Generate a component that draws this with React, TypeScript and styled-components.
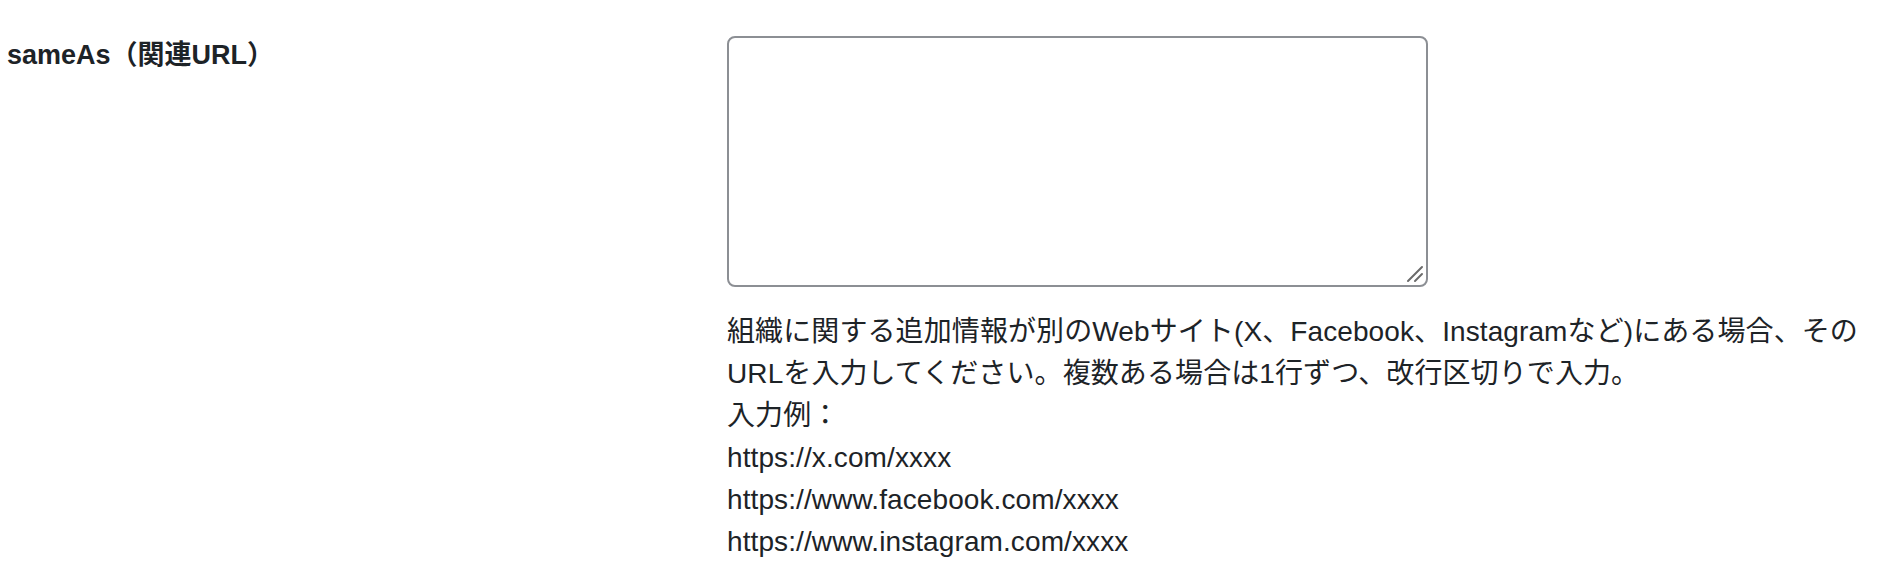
import React from "react";
import styled, { createGlobalStyle } from "styled-components";

const GlobalStyle = createGlobalStyle`
  html, body {
    margin: 0;
    padding: 0;
    background: #ffffff;
  }
  body {
    font-family: "Liberation Sans", "Noto Sans CJK JP", sans-serif;
    color: #1d2327;
  }
`;

const descriptionLines = [
  "組織に関する追加情報が別のWebサイト(X、Facebook、Instagramなど)にある場合、その",
  "URLを入力してください。複数ある場合は1行ずつ、改行区切りで入力。",
  "入力例：",
  "https://x.com/xxxx",
  "https://www.facebook.com/xxxx",
  "https://www.instagram.com/xxxx",
];

const App: React.FC = () => {
  return (
    <>
      <GlobalStyle />
      <Page>
        <Row>
          <Label htmlFor="sameas">sameAs（関連URL）</Label>
          <Field>
            <TextAreaWrap>
              <TextArea id="sameas" name="sameas" />
              <Grip width="18" height="18" viewBox="0 0 18 18" aria-hidden="true">
                <line x1="2" y1="16" x2="16" y2="2" />
                <line x1="9" y1="16" x2="16" y2="9" />
              </Grip>
            </TextAreaWrap>
            <Description>
              {descriptionLines.map((line, i) => (
                <React.Fragment key={i}>
                  {line}
                  {i < descriptionLines.length - 1 && <br />}
                </React.Fragment>
              ))}
            </Description>
          </Field>
        </Row>
      </Page>
    </>
  );
};

export default App;

const Page = styled.div`
  width: 1880px;
  height: 570px;
  box-sizing: border-box;
  padding: 36px 0 0 7px;
  overflow: hidden;
`;

const Row = styled.div`
  display: flex;
  align-items: flex-start;
`;

const Label = styled.label`
  width: 720px;
  flex-shrink: 0;
  padding-top: 2px;
  font-size: 27px;
  font-weight: 700;
  line-height: 34px;
  color: #1d2327;
`;

const Field = styled.div`
  display: flex;
  flex-direction: column;
`;

const TextAreaWrap = styled.div`
  position: relative;
  width: 701px;
  height: 251px;
`;

const TextArea = styled.textarea`
  display: block;
  width: 100%;
  height: 100%;
  box-sizing: border-box;
  margin: 0;
  padding: 8px 12px;
  border: 2px solid #8c8f94;
  border-radius: 8px;
  background: #ffffff;
  font-family: inherit;
  font-size: 28px;
  color: #2c3338;
  resize: none;
  outline: none;
`;

const Grip = styled.svg`
  position: absolute;
  right: 4px;
  bottom: 4px;
  pointer-events: none;
  stroke: #6b6b6b;
  stroke-width: 2;
  stroke-linecap: round;
`;

const Description = styled.p`
  margin: 24px 0 0;
  font-size: 28px;
  line-height: 42px;
  color: #1d2327;
  white-space: nowrap;
  letter-spacing: 0.1px;
`;
